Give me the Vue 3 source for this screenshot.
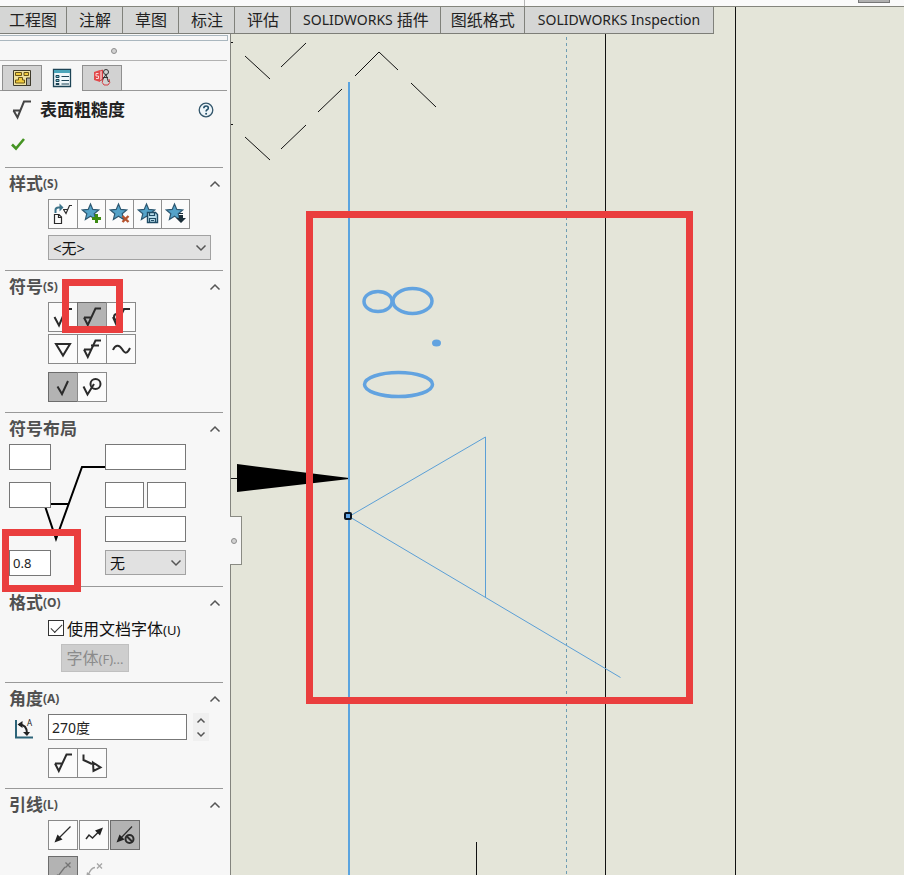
<script setup>
import { ref } from 'vue'

const commandTabs = [
  { cjk: '工程图', size: 'snug' },
  { cjk: '注解' },
  { cjk: '草图' },
  { cjk: '标注' },
  { cjk: '评估' },
  { latin: 'SOLIDWORKS', cjk: '插件' },
  { cjk: '图纸格式', size: 'medium' },
  { latin: 'SOLIDWORKS Inspection', size: 'roomy' },
]

const star =
  '<path d="M12.5 5l2.3 5.4 5.9.5-4.5 3.8 1.4 5.7-5.1-3.1-5.1 3.1 1.4-5.7-4.5-3.8 5.9-.5z" fill="#55a3c9" stroke="#2d5872" stroke-width="1.2"/>'
const rough = '<path d="M7 15.5h7.500M7 15.500l3.800 7.500 7.700-16.500H24" />'

const icons = {
  apply:
    '<path d="M6.500 14v-3q0-2.500 3-2.500h2" stroke="#3c7389" stroke-width="2"/><path d="M10.500 4.500l4 4-4 4z" fill="#3c7389" stroke="none"/><path d="M14 10.500h5M14.500 10.500l2.500 4 3.500-8H23" stroke-width="1.200"/><path d="M5.500 15.500h4.500l2.500 2.500v6.500h-7zM9.500 15.500v3h3" stroke-width="1.200"/>',
  add: star + '<path d="M18.500 15v9M14 19.500h9" stroke="#3c8b12" stroke-width="3"/>',
  remove: star + '<path d="M16.500 17l6 6M22.500 17l-6 6" stroke="#b5532e" stroke-width="2.400"/>',
  save:
    star +
    '<path d="M13.500 13.500h8l2 2v8h-10z" fill="#b9dcea" stroke="#204c66" stroke-width="1.400"/><path d="M15.500 13.500v3h5v-3M15.500 23.500v-4h6v4M17 21.500h3" stroke="#204c66" stroke-width="1.200"/>',
  load: star + '<path d="M17 14h4v1h-4zM17 16h4v3h3l-5 5-5-5h3z" fill="#1c2f3a" stroke="none"/>',
  basic: '<path d="M6.500 15l4.500 8.500L18 7h6"/>',
  machined: rough,
  prohibited: '<path d="M7 15l3.500 8L18 7h6"/><circle cx="11" cy="15" r="3"/>',
  jis: '<path d="M8 10h14l-7 11.500z"/>',
  jisMachined: rough + '<path d="M14 11.500h8"/>',
  wave: '<path d="M7 16c2-5 6-6 9-1s5 5 8-1"/>',
  local: '<path d="M9.500 14.500l4.500 7.500 6-13"/>',
  allAround: '<path d="M6.500 14.500l4 8L17 12"/><circle cx="18.500" cy="12" r="5"/>',
  rotated: '<path d="M6.500 6.500V12L15 16M16 14.500l7.500 5-7 3.500z"/>',
  leader: '<path d="M22.500 6.500L10 19" stroke-width="1.200"/><path d="M6.500 22.500l3-8 5 5z" fill="#222" stroke="none"/>',
  bent: '<path d="M7 19l3-4 3.500 3 6-6" stroke-width="1.500"/><path d="M24 7.500l-3 8-5-5z" fill="#222" stroke="none"/>',
  noLeader:
    '<path d="M22 6.500L10 19" stroke-width="1.200"/><path d="M6.500 22.500l3-8 5 5z" fill="#222" stroke="none"/><circle cx="19.500" cy="19" r="4" stroke-width="2"/><path d="M16.500 16l6 6"/>',
  autoOn:
    '<path d="M17 11L7 24M17.500 6.500l5 5M22.500 6.500l-5 5" stroke="#747474" stroke-width="1.300"/><path d="M8 24l1-6 5 4z" fill="#747474" stroke="none"/>',
  autoOff:
    '<path d="M16 11.500q-4 0-7 8M18 7.500l5 5M23 7.500l-5 5" stroke="#a5a5a5" stroke-width="1.300"/><path d="M7 22l1-6 4 3z" fill="#a5a5a5" stroke="none"/>',
}

const styleTools = ['apply', 'add', 'remove', 'save', 'load']
const symbolRows = [
  ['basic', 'machined', 'prohibited'],
  ['jis', 'jisMachined', 'wave'],
]
const scopeTools = ['local', 'allAround']
const angleTools = ['machined', 'rotated']
const leaderTools = ['leader', 'bent', 'noLeader']

const symbol = ref('machined')
const scope = ref('local')
const leader = ref('noLeader')
const roughness = ref('0.8')
const angle = ref('270度')
const docFont = ref(true)
</script>

<template>
  <div class="app">
    <svg class="drawing" aria-hidden="true">
      <g stroke="#111" fill="none" shape-rendering="crispEdges">
        <line x1="605.5" y1="7" x2="605.5" y2="100%" />
        <line x1="735.5" y1="7" x2="735.5" y2="100%" />
        <line x1="476.5" y1="842" x2="476.5" y2="100%" />
        <line x1="231" y1="478.5" x2="238" y2="478.5" />
        <path d="M231 42.500h2M231 124.500h2" />
      </g>
      <g stroke="#111" fill="none">
        <path
          d="M245 56l25 23M281 67l25-24M355 76l24-24 19 18M411 83l25 24M318 112l24-23M281 149l25-24M245 137l25 23"
        />
      </g>
      <line class="hidden-edge" x1="566.5" y1="7" x2="566.5" y2="100%" />
      <path d="M237 464v28l112-13v-1z" fill="#000" />
      <line class="edge" x1="349" y1="82" x2="349" y2="100%" />
      <g class="value">
        <ellipse cx="378" cy="301.5" rx="14" ry="10" />
        <ellipse cx="412.5" cy="301" rx="19.5" ry="12.5" />
        <ellipse cx="398.5" cy="384.5" rx="34" ry="12" />
        <ellipse class="dot" cx="436.5" cy="343" rx="4.5" ry="3.5" />
      </g>
      <path class="symbol" d="M620.500 677.500L349 516.500l136.500-79.500v160" />
      <rect x="345" y="513" width="6" height="6" rx="1" fill="#62a5e6" stroke="#0b1622" stroke-width="2" />
      <rect class="mark" x="309.5" y="214.5" width="380" height="486" />
    </svg>

    <header class="strip">
      <span class="strip-left"></span>
      <span class="strip-thumb"></span>
    </header>

    <nav class="commands">
      <button v-for="(t, i) in commandTabs" :key="i" type="button" class="command" :class="t.size">
        <span v-if="t.latin" class="latin">{{ t.latin }}</span>
        <span v-if="t.cjk">{{ t.cjk }}</span>
      </button>
    </nav>

    <aside class="panel">
      <div class="groove"></div>
      <div class="grip"><i class="knob"></i></div>

      <div class="panel-tabs">
        <button type="button" class="panel-tab" aria-label="FeatureManager">
          <svg width="20" height="18" viewBox="0 0 20 18">
            <path d="M1.500 1.500h17v15h-17z" fill="#f0e3a0" stroke="#3e3a2c" />
            <path d="M3.500 3.500h6v3h-6zM12 3.500h4.500v3H12zM3.500 14v-3h3V8.500h4V11h2v3z" fill="#f2cb3d" stroke="#6b5718" />
            <path d="M14.500 9h4v7.500h-4z" fill="#a9a9a4" stroke="#3e3a2c" />
          </svg>
        </button>
        <button type="button" class="panel-tab current" aria-label="PropertyManager">
          <svg width="20" height="20" viewBox="0 0 20 20">
            <path d="M1.500 1.500h17v17h-17z" fill="#eef6f9" stroke="#1d4456" stroke-width="1.300" />
            <path d="M2 2h16v3H2z" fill="#4aa5b9" />
            <path d="M4 7.500h3v2H4zM4 11.500h3v2H4zM4 15.500h3v1H4z" fill="#7cc2d2" stroke="#1d4456" />
            <path d="M9.500 8.500H17M9.500 12.500H17M9.500 16H17" stroke="#1d4456" />
          </svg>
        </button>
        <button type="button" class="panel-tab" aria-label="DimXpert">
          <svg width="20" height="20" viewBox="0 0 20 20" fill="none">
            <path d="M2 4l6-2v12l-6-2z" fill="#e2494b" />
            <path d="M6.500 5.500H4v2.500h2.500v2.500H4" stroke="#fbd6d6" />
            <path d="M8 3l2.500-1v9L8 13" fill="#f0a3a3" stroke="#d33d42" />
            <circle cx="14" cy="4" r="2.500" stroke="#333" />
            <path d="M14 6.500l-4 6M14 6.500l2.500 7.500M11 9.500h5" stroke="#333" />
            <path d="M11 11q-2 4 1 6M17 11q2 4-1 6M12 17h4" stroke="#d33d42" />
          </svg>
        </button>
      </div>

      <div class="title-row">
        <svg class="title-icon" width="22" height="20" viewBox="0 0 22 20">
          <path d="M2 10.500h7.500M2.500 10.500l4 7L13 1.500h7" fill="none" stroke="#444" stroke-width="2" />
        </svg>
        <h1>表面粗糙度</h1>
        <button type="button" class="help" aria-label="?">
          <svg width="16" height="16" viewBox="0 0 16 16" fill="none">
            <circle cx="8" cy="8" r="6.800" fill="#eef5f9" stroke="#33566b" stroke-width="1.300" />
            <path d="M5.800 6.300q0-2.300 2.300-2.300 2.200 0 2.200 1.900 0 1.200-1.200 1.900-1 .6-1 1.600" stroke="#24506a" stroke-width="1.600" />
            <circle cx="8.100" cy="11.700" r="1" fill="#24506a" />
          </svg>
        </button>
      </div>
      <div class="confirm-row">
        <button type="button" aria-label="OK">
          <svg width="16" height="14" viewBox="0 0 16 14">
            <path d="M2 7.500l4 4L14 2" fill="none" stroke="#459423" stroke-width="2.600" />
          </svg>
        </button>
      </div>

      <section>
        <h2>样式<small>(S)</small><svg class="caret" viewBox="0 0 12 8"><path d="M1.500 6.500L6 2l4.500 4.500" /></svg></h2>
        <div class="body indent gap-m">
          <div class="segmented">
            <button v-for="n in styleTools" :key="n" type="button" :aria-label="n">
              <svg class="glyph" viewBox="0 1 28 28" v-html="icons[n]"></svg>
            </button>
          </div>
          <div class="dropdown wide">
            <select aria-label="样式"><option>&lt;无&gt;</option></select>
            <svg class="chevron" viewBox="0 0 12 8"><path d="M1.500 1.500L6 6l4.500-4.500" /></svg>
          </div>
        </div>
      </section>

      <section>
        <h2>符号<small>(S)</small><svg class="caret" viewBox="0 0 12 8"><path d="M1.500 6.500L6 2l4.500 4.500" /></svg></h2>
        <div class="body indent gap-l">
          <div class="tool-grid">
            <div v-for="(row, r) in symbolRows" :key="r" class="tools joined">
              <button
                v-for="n in row"
                :key="n"
                type="button"
                class="tool"
                :class="{ on: symbol === n }"
                :aria-label="n"
                @click="symbol = n"
              >
                <svg class="glyph" viewBox="1 1 28 28" v-html="icons[n]"></svg>
              </button>
            </div>
          </div>
          <div class="tools joined">
            <button
              v-for="n in scopeTools"
              :key="n"
              type="button"
              class="tool"
              :class="{ on: scope === n }"
              :aria-label="n"
              @click="scope = n"
            >
              <svg class="glyph" viewBox="1 1 28 28" v-html="icons[n]"></svg>
            </button>
          </div>
        </div>
        <span class="callout callout-symbol"></span>
      </section>

      <section>
        <h2>符号布局<svg class="caret" viewBox="0 0 12 8"><path d="M1.500 6.500L6 2l4.500 4.500" /></svg></h2>
        <div class="body layout">
          <svg class="layout-lines" viewBox="0 0 96 98">
            <path d="M96 23H73L47 95 36 62M42 60h18" />
          </svg>
          <div class="layout-row first">
            <input type="text" aria-label="1" />
            <input class="right" type="text" aria-label="2" />
          </div>
          <div class="layout-row">
            <input type="text" aria-label="3" />
            <div class="right pair">
              <input type="text" aria-label="4" />
              <input type="text" aria-label="5" />
            </div>
          </div>
          <div class="layout-row">
            <input class="right" type="text" aria-label="6" />
          </div>
          <div class="layout-row">
            <input v-model="roughness" type="text" aria-label="7" />
            <div class="dropdown right">
              <select aria-label="符号布局"><option>无</option></select>
              <svg class="chevron" viewBox="0 0 12 8"><path d="M1.500 1.500L6 6l4.500-4.500" /></svg>
            </div>
          </div>
        </div>
        <span class="callout callout-value"></span>
      </section>

      <section>
        <h2>格式<small>(O)</small><svg class="caret" viewBox="0 0 12 8"><path d="M1.500 6.500L6 2l4.500 4.500" /></svg></h2>
        <div class="body indent gap-m">
          <label class="check"><input v-model="docFont" type="checkbox" /><span>使用文档字体<small>(U)</small></span></label>
          <button type="button" class="font-button" disabled>字体<small>(F)...</small></button>
        </div>
      </section>

      <section>
        <h2>角度<small>(A)</small><svg class="caret" viewBox="0 0 12 8"><path d="M1.500 6.500L6 2l4.500 4.500" /></svg></h2>
        <div class="body gap-l">
          <div class="angle-row">
            <svg class="angle-icon" width="20" height="22" viewBox="0 0 20 22">
              <path d="M2 2v17.500h17" fill="none" stroke="#2d6479" stroke-width="2" />
              <path d="M5 6.500q8 0 8 9" fill="none" stroke="#222" stroke-width="2" />
              <path d="M3.500 6.500l5-3.500v7zM13 18l-4-4h7z" fill="#222" />
              <text x="13" y="8" font-size="8" font-family="Noto Sans, sans-serif" fill="#222">A</text>
            </svg>
            <input v-model="angle" type="text" aria-label="角度" />
            <div class="spinner">
              <button type="button" aria-label="+"><svg viewBox="0 0 10 7"><path d="M1.500 5.500L5 2l3.500 3.500" /></svg></button>
              <button type="button" aria-label="-"><svg viewBox="0 0 10 7"><path d="M1.500 1.500L5 5l3.500-3.500" /></svg></button>
            </div>
          </div>
          <div class="tools joined indent">
            <button v-for="n in angleTools" :key="n" type="button" class="tool" :aria-label="n">
              <svg class="glyph" viewBox="1 1 28 28" v-html="icons[n]"></svg>
            </button>
          </div>
        </div>
      </section>

      <section>
        <h2>引线<small>(L)</small><svg class="caret" viewBox="0 0 12 8"><path d="M1.500 6.500L6 2l4.500 4.500" /></svg></h2>
        <div class="body indent gap-m">
          <div class="tools spaced">
            <button
              v-for="n in leaderTools"
              :key="n"
              type="button"
              class="tool"
              :class="{ on: leader === n }"
              :aria-label="n"
              @click="leader = n"
            >
              <svg class="glyph" viewBox="1 1 28 28" v-html="icons[n]"></svg>
            </button>
          </div>
          <div class="tools spaced">
            <button type="button" class="tool on" aria-label="auto" disabled>
              <svg class="glyph" viewBox="1 1 28 28" v-html="icons.autoOn"></svg>
            </button>
            <button type="button" class="tool ghost" aria-label="bent" disabled>
              <svg class="glyph" viewBox="1 1 28 28" v-html="icons.autoOff"></svg>
            </button>
          </div>
        </div>
      </section>

      <button type="button" class="splitter" aria-label="panel"><i class="knob"></i></button>
    </aside>
  </div>
</template>

<style>
body {
  margin: 0;
}
</style>

<style scoped>
* {
  box-sizing: border-box;
}
.app {
  position: relative;
  display: flex;
  flex-direction: column;
  height: 100vh;
  overflow: hidden;
  background: #e4e5d9;
  color: #222;
  font-family: 'Noto Sans', 'Noto Sans CJK SC', sans-serif;
  font-size: 16px;
}
button,
input,
select {
  margin: 0;
  padding: 0;
  border: 0;
  border-radius: 0;
  background: none;
  color: inherit;
  font: inherit;
}
svg {
  display: block;
}

/* drawing sheet */
.drawing {
  position: absolute;
  inset: 0;
  width: 100%;
  height: 100%;
}
.hidden-edge {
  stroke: #6f9db3;
  stroke-dasharray: 3 3;
  shape-rendering: crispEdges;
}
.edge {
  stroke: #5ba4df;
  stroke-width: 2;
}
.value ellipse {
  fill: none;
  stroke: #62a3e0;
  stroke-width: 3.5;
}
.value .dot {
  fill: #62a3e0;
  stroke: none;
}
.symbol {
  fill: none;
  stroke: #5b9fd6;
}
.mark {
  fill: none;
  stroke: #ea3e3e;
  stroke-width: 7;
}

/* top */
.strip {
  position: relative;
  display: flex;
  justify-content: space-between;
  flex: none;
  height: 7px;
  padding-right: 14px;
  border-bottom: 1px solid #84857c;
  background: #fafafa;
}
.strip-left {
  width: 525px;
  border-right: 1px solid #b4b4b4;
}
.strip-thumb {
  width: 32px;
  height: 3px;
  border: 1px solid #777;
  border-top: 0;
  background: #b0b0b0;
}
.commands {
  position: relative;
  display: flex;
  flex: none;
  align-self: flex-start;
  height: 27px;
  border-bottom: 1px solid #7d7e78;
}
.command {
  display: flex;
  align-items: center;
  gap: 4px;
  padding: 0 11px 0 12px;
  border-right: 1px solid #80817b;
  background: #d5d6d5;
  line-height: 24px;
  white-space: nowrap;
}
.command.snug {
  padding: 0 9px;
}
.command.medium {
  padding: 0 9px 0 10px;
}
.command.roomy {
  padding: 0 13px;
}
.latin {
  font-size: 14px;
}

/* property panel */
.panel {
  position: relative;
  flex: 1;
  width: 231px;
  min-height: 0;
  border-right: 1px solid #83847e;
  background: #f7f7f7;
}
.groove {
  height: 6px;
  margin: 1px 2px 0 0;
  border: 1px solid #aab7bf;
  border-width: 1px 1px 1px 0;
}
.grip {
  display: grid;
  place-items: center;
  height: 20px;
  margin-right: 3px;
  border-bottom: 1px solid #b2b2b2;
}
.knob {
  width: 6px;
  height: 6px;
  border: 1px solid #8e8e8e;
  border-radius: 50%;
  background: #d2d2d2;
}
.panel-tabs {
  display: flex;
  height: 30px;
  margin-right: 3px;
  padding: 4px 0 0 2px;
  background: linear-gradient(#999, #999) bottom / 100% 1px no-repeat;
}
.panel-tab {
  display: grid;
  place-items: center;
  width: 40px;
  border: 1px solid #8f8f8f;
  background: #d2d2d2;
}
.panel-tab.current {
  border-color: #f7f7f7;
  background: #f7f7f7;
}
.title-row {
  display: flex;
  align-items: center;
  height: 38px;
  padding: 0 16px 0 11px;
}
h1 {
  flex: 1;
  margin: 0 0 0 7px;
  font-size: 17px;
  line-height: 24px;
  font-weight: 700;
}
.confirm-row {
  display: flex;
  align-items: flex-start;
  height: 38px;
  padding: 8px 0 0 10px;
}

/* sections */
section {
  position: relative;
  margin: 0 7px 0 5px;
  border-top: 1px solid #999;
}
h2 {
  display: flex;
  align-items: center;
  height: 31px;
  margin: 0;
  padding: 0 2px 0 4px;
  color: #505050;
  font-size: 17px;
  line-height: 24px;
  font-weight: 700;
}
small {
  font-size: 13px;
}
h2 small {
  font-size: 12px;
}
.caret {
  width: 12px;
  height: 8px;
  margin-left: auto;
}
.caret path,
.chevron path,
.spinner path {
  fill: none;
  stroke: #555;
  stroke-width: 1.5;
}
.body {
  display: flex;
  flex-direction: column;
  align-items: flex-start;
  padding-bottom: 10px;
}
.indent {
  padding-left: 43px;
}
.gap-m {
  gap: 6px;
}
.gap-l {
  gap: 8px;
}
.glyph {
  width: 28px;
  height: 28px;
  fill: none;
  stroke: #2b2b2b;
  stroke-width: 2;
}
.segmented {
  display: grid;
  grid-template-columns: repeat(5, 28px);
  height: 30px;
  border: 1px solid #909090;
  background: #fbfbfb;
}
.segmented button + button {
  border-left: 1px solid #909090;
}
.segmented button {
  overflow: hidden;
}
.tool-grid {
  display: grid;
  gap: 2px;
}
.tools {
  display: flex;
}
.tool {
  width: 30px;
  height: 30px;
  border: 1px solid #8a8a8a;
  background: #fbfbfb;
}
.joined .tool + .tool {
  margin-left: -1px;
}
.spaced {
  gap: 1px;
}
.tool.on {
  border-color: #6c6c6c;
  background: #b3b3b3;
}
.tool.ghost {
  border-color: transparent;
  background: none;
}

.dropdown {
  display: grid;
  align-items: center;
}
.dropdown > * {
  grid-area: 1 / 1;
}
.dropdown.wide {
  width: 163px;
}
.dropdown select {
  appearance: none;
  width: 100%;
  height: 25px;
  padding: 0 4px;
  border: 1px solid #a2a2a2;
  background: #e1e1e1;
  color: #111;
  font-size: 15px;
  line-height: 22px;
}
.chevron {
  justify-self: end;
  width: 12px;
  height: 8px;
  margin-right: 4px;
  pointer-events: none;
}
input[type='text'] {
  width: 42px;
  height: 26px;
  padding: 0 3px;
  border: 1px solid #777;
  background: #fff;
  font-size: 13px;
}
.layout {
  position: relative;
  gap: 8px;
  align-items: stretch;
  padding-left: 4px;
}
.layout-lines {
  position: absolute;
  left: 4px;
  top: 0;
  width: 96px;
  height: 98px;
}
.layout-lines path {
  fill: none;
  stroke: #000;
  stroke-width: 2;
}
.layout-row {
  position: relative;
  display: flex;
  justify-content: space-between;
  height: 26px;
  padding-right: 37px;
}
.layout-row.first {
  margin-bottom: 4px;
}
.layout-row > .right {
  width: 81px;
  margin-left: auto;
}
.layout-row > .dropdown {
  align-items: start;
}
.dropdown .chevron {
  align-self: center;
}
.pair {
  display: flex;
  gap: 3px;
}
.pair input[type='text'] {
  flex: 1;
  min-width: 0;
}

.check {
  display: flex;
  align-items: center;
  gap: 3px;
  height: 20px;
  color: #111;
  white-space: nowrap;
}
.check input {
  appearance: none;
  display: grid;
  place-items: center;
  width: 16px;
  height: 16px;
  border: 1px solid #333;
  background: #fff;
}
.check input:checked::after {
  content: '';
  width: 10px;
  height: 5px;
  border: solid #333;
  border-width: 0 0 1px 1px;
  transform: translateY(-1px) rotate(-45deg);
}
.font-button {
  width: 68px;
  height: 28px;
  margin-left: 13px;
  border: 1px solid #c0c0c0;
  background: #cecece;
  color: #8b8b8b;
  line-height: 24px;
  white-space: nowrap;
}
.angle-row {
  display: flex;
  align-items: center;
  height: 26px;
}
.angle-icon {
  margin: 4px 14px 0 9px;
}
.angle-row input[type='text'] {
  width: 139px;
  font-size: 14px;
}
.spinner {
  display: grid;
  width: 16px;
  height: 28px;
  margin-left: 6px;
  background: #f0f0f0;
}
.spinner button {
  display: grid;
  place-items: center;
}
.spinner svg {
  width: 10px;
  height: 7px;
}

/* marks over the panel */
.callout {
  position: absolute;
  z-index: 2;
  border: 7px solid #ea3e3e;
  pointer-events: none;
}
.callout-symbol {
  left: 57px;
  top: 8px;
  width: 61px;
  height: 54px;
}
.callout-value {
  left: -3px;
  top: 116px;
  width: 79px;
  height: 63px;
}
.splitter {
  position: absolute;
  left: 100%;
  top: 482px;
  display: grid;
  place-items: center start;
  width: 12px;
  height: 49px;
  padding-left: 1px;
  border: 1px solid #8a8b84;
  border-left: 0;
  background: #f7f7f7;
}
</style>
